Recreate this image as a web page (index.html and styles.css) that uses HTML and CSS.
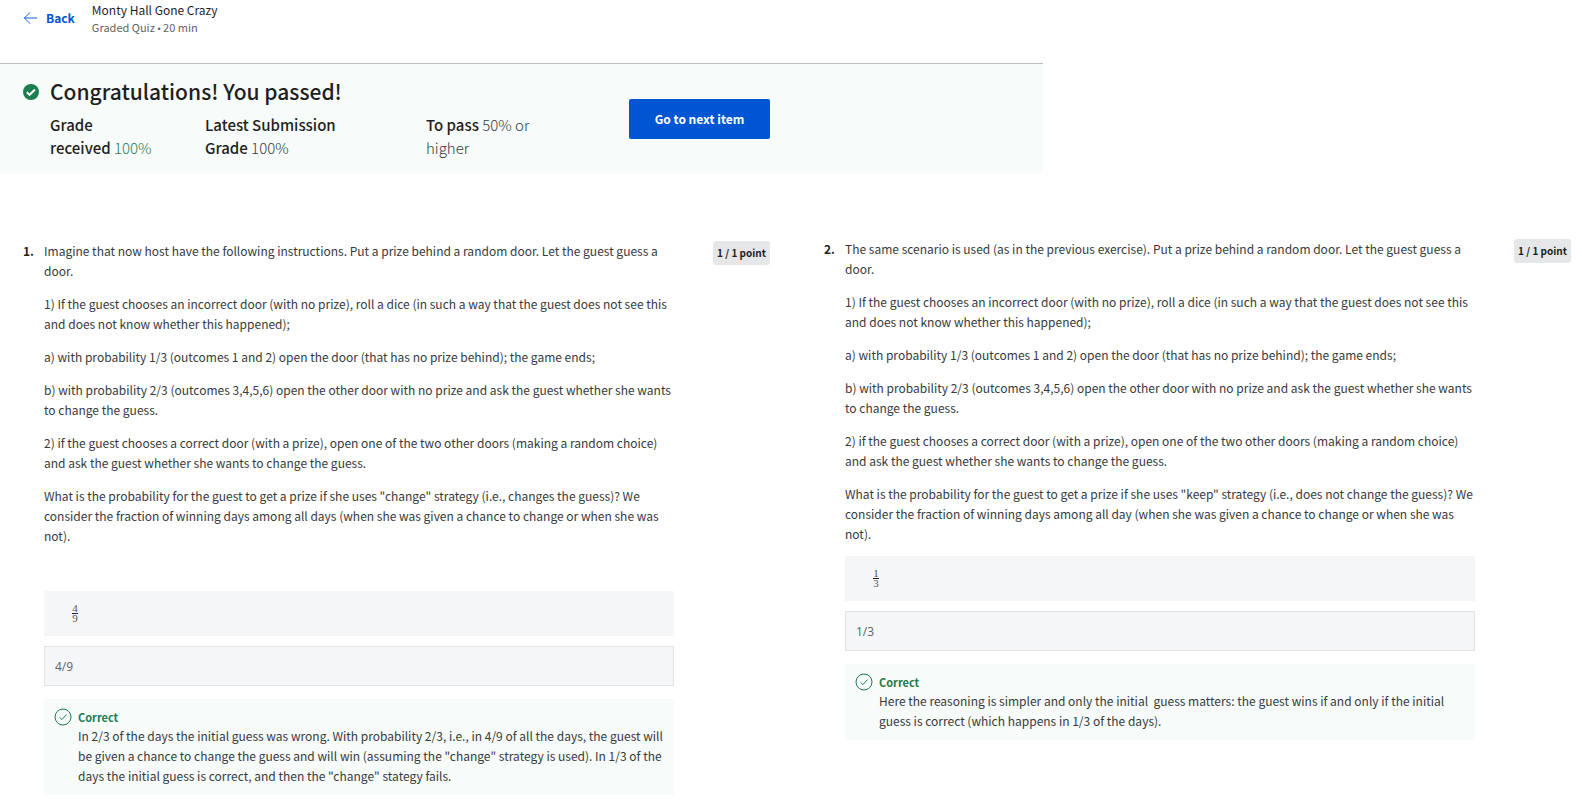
FILE: index.html
```
<!DOCTYPE html>
<html lang="en">
<head>
<meta charset="utf-8">
<title>Monty Hall Gone Crazy</title>
<link rel="stylesheet" href="styles.css">
</head>
<body>
<header class="topbar">
  <a class="back" href="#">
    <svg class="back-icon" viewBox="0 0 16 14" aria-hidden="true"><path d="M15 7H1.500M7.500 1 1.500 7l6 6"/></svg>
    Back
  </a>
  <div>
    <h1 class="title">Monty Hall Gone Crazy</h1>
    <p class="subtitle">Graded Quiz<span class="dot"> • </span>20 min</p>
  </div>
</header>

<section class="banner">
  <svg class="banner-icon" viewBox="0 0 16 16" aria-hidden="true"><circle cx="8" cy="8" r="8"/><path d="m3.800 8.300 2.800 2.500 5.400-5.300"/></svg>
  <div class="banner-main">
    <h2 class="banner-title">Congratulations! You passed!</h2>
    <div class="grades">
      <p class="grade"><b>Grade<br>received</b> <span class="green">100%</span></p>
      <p class="grade"><b>Latest Submission<br>Grade</b> 100%</p>
      <p class="grade"><b>To pass</b> 50% or<br>higher</p>
    </div>
  </div>
  <button class="next" type="button">Go to next item</button>
</section>

<main class="questions">
  <section class="question">
    <span class="number">1.</span>
    <div class="body">
      <div class="prompt prompt-spaced">
        <p>Imagine that now host have the following instructions. Put a prize behind a random door. Let the guest guess a door.</p>
        <p>1) If the guest chooses an incorrect door (with no prize), roll a dice (in such a way that the guest does not see this and does not know whether this happened);</p>
        <p>a) with probability 1/3 (outcomes 1 and 2) open the door (that has no prize behind); the game ends;</p>
        <p>b) with probability 2/3 (outcomes 3,4,5,6) open the other door with no prize and ask the guest whether she wants to change the guess.</p>
        <p>2) if the guest chooses a correct door (with a prize), open one of the two other doors (making a random choice) and ask the guest whether she wants to change the guess.</p>
        <p>What is the probability for the guest to get a prize if she uses "change" strategy (i.e., changes the guess)? We consider the fraction of winning days among all days (when she was given a chance to change or when she was not).</p>
      </div>
      <div class="preview"><span class="fraction"><span class="numerator">4</span><span>9</span></span></div>
      <input class="answer" type="text" value="4/9" aria-label="Answer to question 1" readonly>
      <div class="feedback">
        <svg class="feedback-icon" viewBox="0 0 18 18" aria-hidden="true"><circle cx="9" cy="9" r="8"/><path d="m5.500 9.300 2.400 2.300 4.600-5"/></svg>
        <div>
          <h3 class="verdict">Correct</h3>
          <p>In 2/3 of the days the initial guess was wrong. With probability 2/3, i.e., in 4/9 of all the days, the guest will be given a chance to change the guess and will win (assuming the "change" strategy is used). In 1/3 of the days the initial guess is correct, and then the "change" stategy fails.</p>
        </div>
      </div>
    </div>
    <span class="points">1 / 1 point</span>
  </section>

  <section class="question question-second">
    <span class="number">2.</span>
    <div class="body">
      <div class="prompt">
        <p>The same scenario is used (as in the previous exercise). Put a prize behind a random door. Let the guest guess a door.</p>
        <p>1) If the guest chooses an incorrect door (with no prize), roll a dice (in such a way that the guest does not see this and does not know whether this happened);</p>
        <p>a) with probability 1/3 (outcomes 1 and 2) open the door (that has no prize behind); the game ends;</p>
        <p>b) with probability 2/3 (outcomes 3,4,5,6) open the other door with no prize and ask the guest whether she wants to change the guess.</p>
        <p>2) if the guest chooses a correct door (with a prize), open one of the two other doors (making a random choice) and ask the guest whether she wants to change the guess.</p>
        <p>What is the probability for the guest to get a prize if she uses "keep" strategy (i.e., does not change the guess)? We consider the fraction of winning days among all day (when she was given a chance to change or when she was not).</p>
      </div>
      <div class="preview"><span class="fraction"><span class="numerator">1</span><span>3</span></span></div>
      <input class="answer" type="text" value="1/3" aria-label="Answer to question 2" readonly>
      <div class="feedback">
        <svg class="feedback-icon" viewBox="0 0 18 18" aria-hidden="true"><circle cx="9" cy="9" r="8"/><path d="m5.500 9.300 2.400 2.300 4.600-5"/></svg>
        <div>
          <h3 class="verdict">Correct</h3>
          <p>Here the reasoning is simpler and only the initial&nbsp; guess matters: the guest wins if and only if the initial guess is correct (which happens in 1/3 of the days).</p>
        </div>
      </div>
    </div>
    <span class="points">1 / 1 point</span>
  </section>
</main>
</body>
</html>
```
FILE: styles.css
```
* {
  box-sizing: border-box;
}

body {
  margin: 0;
  background: #fff;
  color: #373a3c;
  font-family: "Noto Sans CJK SC", "Open Sans", sans-serif;
  font-size: 12px;
  line-height: 20px;
}

h1, h2, h3, p {
  margin: 0;
}

.topbar {
  display: flex;
  gap: 17px;
  height: 63px;
  padding-left: 23px;
}

.back {
  display: flex;
  align-items: center;
  gap: 8px;
  height: 35px;
  color: #0056d2;
  font-size: 12px;
  font-weight: 700;
  text-decoration: none;
}

.back-icon {
  width: 15px;
  height: 14px;
  fill: none;
  stroke: #0056d2;
  stroke-width: 1;
}

.title {
  color: #1f1f1f;
  font-size: 12px;
  font-weight: 400;
  line-height: 19px;
}

.subtitle {
  color: #636363;
  font-size: 11px;
  line-height: 17px;
}

.dot {
  font-family: "Liberation Sans", sans-serif;
  font-size: 9px;
}

.banner {
  display: flex;
  gap: 11px;
  width: 65.9%;
  padding: 14px 0 15px 23px;
  border-top: 1px solid #bdbdbd;
  background: #f7fbfa;
}

.banner-icon {
  flex: none;
  width: 16px;
  height: 16px;
  margin-top: 6px;
}

.banner-icon circle {
  fill: #1d7c50;
}

.banner-icon path {
  fill: none;
  stroke: #fff;
  stroke-width: 2;
}

.banner-main {
  flex: none;
}

.banner-title {
  color: #1f1f1f;
  font-size: 21px;
  font-weight: 500;
  line-height: 26px;
}

.grades {
  display: grid;
  grid-template-columns: 155px 221px 110px;
  padding-top: 9px;
}

.grade {
  color: #373a3c;
  font-size: 15px;
  font-weight: 300;
  line-height: 23px;
}

.grade b {
  color: #1f1f1f;
  font-weight: 500;
}

.green {
  color: #1d7c50;
}

.next {
  width: 141px;
  height: 40px;
  margin: 21px 0 0 82px;
  border: 0;
  border-radius: 2px;
  background: #0056d2;
  color: #fff;
  font: 700 12px/20px "Noto Sans CJK SC", "Open Sans", sans-serif;
}

.questions {
  display: grid;
  grid-template-columns: 1fr 1fr;
  column-gap: 54px;
  padding: 67px 11px 10px 23px;
}

.question {
  display: flex;
  align-items: flex-start;
}

.question-second {
  margin-top: -2px;
}

.number {
  flex: none;
  width: 21px;
  color: #1f1f1f;
  font-weight: 700;
}

.body {
  flex: 1;
  margin-right: 39px;
}

.prompt {
  display: grid;
  row-gap: 13px;
  margin-bottom: 12px;
}

.prompt-spaced {
  margin-bottom: 45px;
}

.preview {
  height: 45px;
  padding: 13px 28px;
  background: #f5f6f8;
}

.fraction {
  display: grid;
  width: 6px;
  color: #555;
  font-family: "Liberation Serif", serif;
  font-size: 11px;
  line-height: 9px;
  text-align: center;
}

.numerator {
  border-bottom: 1px solid #222;
}

.answer {
  display: block;
  width: 100%;
  height: 40px;
  margin: 10px 0 13px;
  padding: 0 10px;
  border: 1px solid #e1e3e5;
  background: #f5f6f8;
  color: #636363;
  font: 12px/20px "Open Sans", sans-serif;
}

.feedback {
  display: flex;
  gap: 6px;
  padding: 9px 10px;
  background: #f7fbfa;
}

.feedback-icon {
  flex: none;
  width: 18px;
  height: 18px;
  fill: none;
  stroke: #1d7c50;
  stroke-width: 1;
}

.verdict {
  color: #1d7c50;
  font-size: 11px;
  line-height: 18px;
}

.points {
  flex: none;
  width: 57px;
  border-radius: 3px;
  background: #e5e7e8;
  color: #1f1f1f;
  font-size: 10px;
  font-weight: 700;
  line-height: 24px;
  text-align: center;
}
```
